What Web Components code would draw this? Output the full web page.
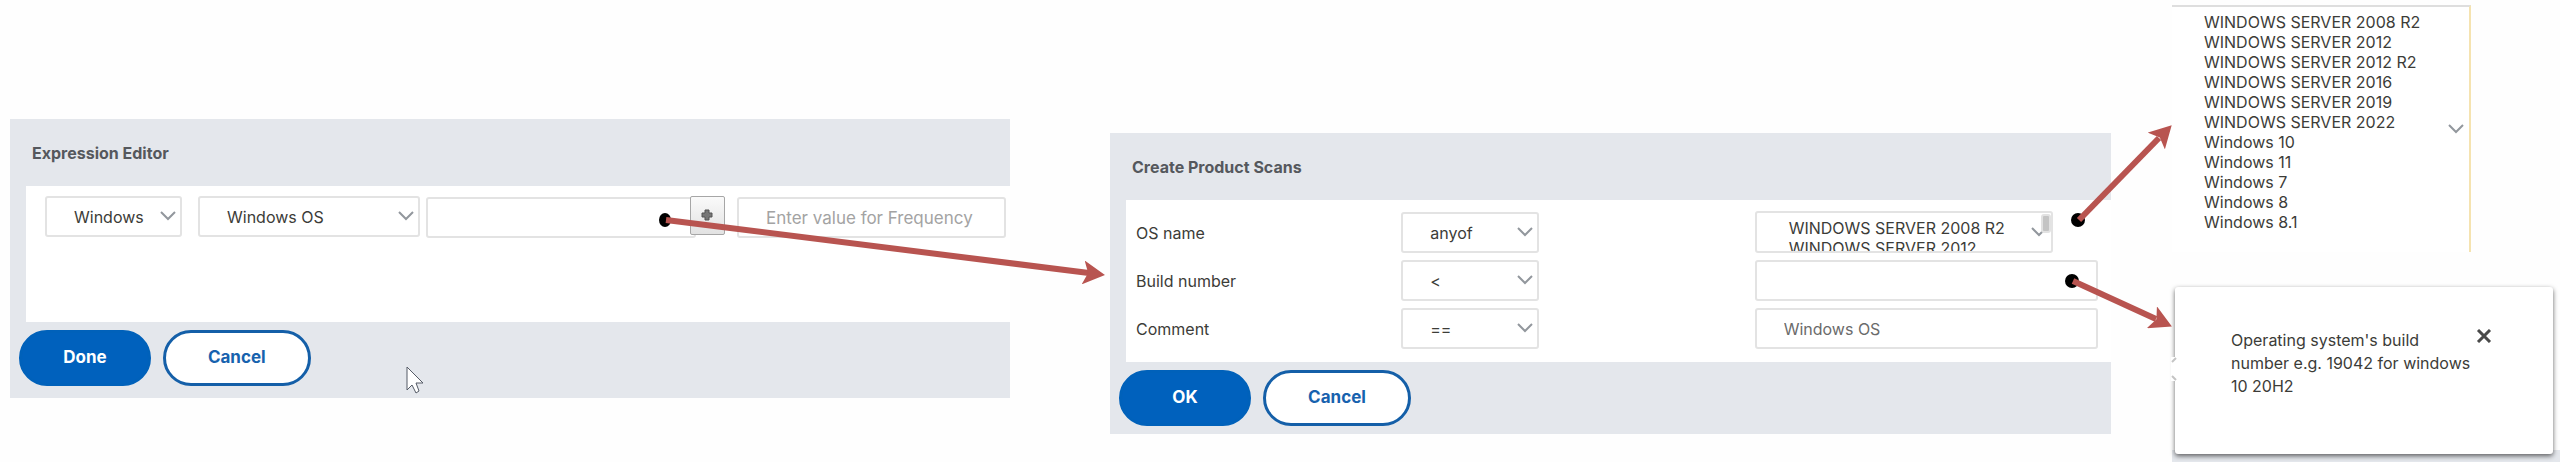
<!DOCTYPE html>
<html lang="en">
<head>
<meta charset="utf-8">
<title>Expression Editor</title>
<style>
body { margin: 0; background: #fefefe; color: #3c3c38; font: 16px/20px Inter, "Liberation Sans", sans-serif; }
</style>
</head>
<body>
<scan-page></scan-page>
<script>
const define = (name, html, setup) => {
  const template = document.createElement('template');
  template.innerHTML = html;
  customElements.define(name, class extends HTMLElement {
    constructor() {
      super();
      this.attachShadow({ mode: 'open' }).append(template.content.cloneNode(true));
    }
    connectedCallback() {
      if (setup && !this.ready) { this.ready = true; setup(this, this.shadowRoot); }
    }
  });
};

const controlCss = `
  *, *::before { box-sizing: border-box; }
  select, input {
    display: block; width: 100%; height: 41px; margin: 0; padding: 0 27px;
    border: 2px solid #e3e3e3; border-radius: 3px; background: #fff; color: #3c3c38;
    font: inherit; appearance: none; outline: none;
  }
  .pick { position: relative; }
  .pick svg { position: absolute; right: 6px; top: 14px; width: 16px; height: 12px; pointer-events: none; }
  input { font-size: var(--entry-size, 16px); color: #6b6b6b; }
  input::placeholder { color: #a3a3a3; opacity: 1; }
`;
const chevron = `<svg viewBox="0 0 16 12" aria-hidden="true"><path d="M1 2l7 7 7-7" fill="none" stroke="#92979d" stroke-width="2"/></svg>`;

define('pill-button', `
  <style>
    :host { display: block; }
    button { width: 100%; height: 56px; border: 3px solid #0061ba; border-radius: 28px; background: #0061bd;
      color: #fff; font: inherit; font-size: 17px; font-weight: 700; padding: 0 0 2px; }
    :host([kind="outline"]) button { background: #fff; color: #1762ae; border-color: #145fa8; }
  </style>
  <button type="button"><slot></slot></button>`);

define('select-field', `
  <style>:host { display: block; } ${controlCss}</style>
  <div class="pick"><select><option></option></select>${chevron}</div>`,
  (el, root) => {
    root.querySelector('option').textContent = el.getAttribute('value');
    root.querySelector('select').setAttribute('aria-label', el.getAttribute('label'));
  });

define('text-field', `
  <style>:host { display: block; } ${controlCss}</style>
  <input type="text">`,
  (el, root) => {
    const input = root.querySelector('input');
    input.setAttribute('aria-label', el.getAttribute('label'));
    input.placeholder = el.getAttribute('placeholder') || '';
  });

define('add-button', `
  <style>
    :host { display: block; position: relative; z-index: 1; }
    button { display: grid; place-items: center; box-sizing: border-box; width: 100%; height: 39px; padding: 0 2px 2px 0;
      border: 1px solid #a6a6a6; border-radius: 2px; background: linear-gradient(#fafafa, #e2e2e2); }
    svg { width: 12px; height: 12px; }
  </style>
  <button type="button" aria-label="Add expression">
    <svg viewBox="0 0 12 12"><path d="M4 1h4v3h3v4H8v3H4V8H1V4h3z" fill="#777" stroke="#555"/></svg>
  </button>`);

define('option-list', `
  <style>
    :host { display: block; }
    .frame { position: relative; box-sizing: border-box; overflow: hidden; }
    select { display: block; width: 100%; margin: 0; border: 0; padding: 0; background: transparent; appearance: none;
      color: inherit; font: inherit; overflow: hidden; outline: none; border-radius: 0; scrollbar-width: none; }
    option { min-height: 0; height: 20px; padding: 0; font: inherit; line-height: 20px; }
    svg { position: absolute; width: 16px; height: 12px; }
    :host([mode="compact"]) .frame { height: 42px; border: 2px solid #e3e3e3; border-radius: 3px; background: #fff; }
    :host([mode="compact"]) select { height: 38px; padding: 5px 0 0 32px; }
    :host([mode="compact"]) svg { right: 4px; top: 13px; }
    :host([mode="compact"]) .frame::after { content: ""; position: absolute; right: 0; top: 1px; width: 10px; height: 19px;
      border-radius: 3px; background: #c4c4c4; border: 2px solid #e2e2e2; box-sizing: border-box; }
    :host([mode="full"]) .frame { border-top: 2px solid #dedede; border-right: 2px solid #f5e3b0; padding: 5px 0 20px 32px; background: #fff; }
    :host([mode="full"]) select { height: 220px; }
    :host([mode="full"]) svg { right: 5px; top: 116px; }
  </style>
  <div class="frame"><select multiple></select>${chevron}</div>`,
  (el, root) => {
    const select = root.querySelector('select');
    select.setAttribute('aria-label', 'OS name values');
    const names = ['WINDOWS SERVER 2008 R2', 'WINDOWS SERVER 2012', 'WINDOWS SERVER 2012 R2', 'WINDOWS SERVER 2016',
      'WINDOWS SERVER 2019', 'WINDOWS SERVER 2022', 'Windows 10', 'Windows 11', 'Windows 7', 'Windows 8', 'Windows 8.1'];
    names.slice(0, el.getAttribute('mode') === 'compact' ? 2 : 11).forEach(n => select.add(new Option(n)));
  });

define('criteria-row', `
  <style>
    :host { display: grid; grid-template-columns: 265fr 138fr 215fr 343fr; align-items: center; }
    ${controlCss}
    .value { grid-column: 4; }
  </style>
  <label for="op"></label>
  <div class="pick"><select id="op"><option></option></select>${chevron}</div>
  <div class="value"><slot><input type="text"></slot></div>`,
  (el, root) => {
    root.querySelector('label').textContent = el.getAttribute('label');
    root.querySelector('option').textContent = el.getAttribute('operator');
    const input = root.querySelector('input');
    input.value = el.getAttribute('value') || '';
    input.setAttribute('aria-label', el.getAttribute('label') + ' value');
  });

define('dialog-panel', `
  <style>
    :host { display: block; background: #e4e7ec; }
    h2 { margin: 0; padding: 24px 0 23px 22px; font-size: 16px; line-height: 20px; font-weight: 700; color: #55585d; }
    .body { margin-left: 16px; background: #fff; }
    .actions { display: grid; grid-template-columns: 132fr 12fr 148fr 700fr; padding: 8px 0 0 9px; height: var(--foot, 67px); box-sizing: border-box; }
    ::slotted(pill-button:nth-of-type(2)) { grid-column: 3; }
  </style>
  <section>
    <h2><slot name="title"></slot></h2>
    <div class="body"><slot></slot></div>
    <div class="actions"><slot name="action"></slot></div>
  </section>`);

define('help-card', `
  <style>
    :host { display: block; padding: 0 7px 8px 3px; background: linear-gradient(to top, #e4e7ec 12px, transparent 12px); }
    .card { position: relative; box-sizing: border-box; display: flex; padding: 42px 32px 56px 56px; background: #fff; border-radius: 3px;
      box-shadow: 0 2px 5px rgba(0,0,0,.6); }
    .notch { position: absolute; left: -4px; top: 70px; width: 8px; height: 24px; }
    p { margin: 0; line-height: 23px; white-space: nowrap; width: 245px; }
    button { border: 0; padding: 0; background: none; width: 16px; height: 14px; }
    svg { display: block; }
  </style>
  <div class="card" role="tooltip">
    <svg class="notch" viewBox="0 0 8 24" aria-hidden="true"><path d="M0 0h8v24H0z" fill="#fff"/><path d="M1 5l4-4M1 19l4 4" stroke="#c4c4c4" stroke-width="2"/></svg>
    <p>Operating system's build<br>number e.g. 19042 for windows<br>10 20H2</p>
    <button type="button" aria-label="Close"><svg width="16" height="14" viewBox="0 0 16 14"><path d="M2 1l12 12M14 1L2 13" stroke="#4a4a4a" stroke-width="3"/></svg></button>
  </div>`);

define('callout-arrows', `
  <style>
    :host { position: absolute; inset: 0; z-index: 2; pointer-events: none; }
    svg { display: block; width: 100%; height: 462px; }
  </style>
  <svg viewBox="0 0 2560 462" preserveAspectRatio="none" aria-hidden="true">
    <defs><marker id="head" viewBox="0 0 22 24" refX="21" refY="12" markerWidth="22" markerHeight="24" markerUnits="userSpaceOnUse" orient="auto">
      <path d="M22 12L0 0l5 12-5 12z" fill="#b85450"/></marker></defs>
    <g>
      <ellipse cx="665" cy="220" rx="6" ry="7"/><circle cx="2078" cy="220" r="7"/><circle cx="2072" cy="281" r="7"/>
    </g>
    <g stroke="#b85450" fill="none">
      <path d="M666 220L1089 273" stroke-width="6"/><path d="M666 220L1104 275" stroke="none" marker-end="url(#head)"/>
      <path d="M2079 220L2159 138" stroke-width="6"/><path d="M2079 220L2171 126" stroke="none" marker-end="url(#head)"/>
      <path d="M2073 281L2156 319" stroke-width="6"/><path d="M2073 281L2171 326" stroke="none" marker-end="url(#head)"/>
    </g>
    <path d="M407 367v23l5-5 4 8 3-2-3-8h7z" fill="#fff" stroke="#555b66"/>
  </svg>`);

define('scan-page', `
  <style>
    :host { display: grid; position: relative; grid-template-columns: 1000fr 100fr 1001fr 61fr 388fr; align-items: start; padding-left: 10px; }
    .editor { margin-top: 119px; --foot: 76px; }
    .scans { grid-column: 3; margin-top: 133px; --foot: 72px; }
    aside { grid-column: 5; padding-top: 5px; }
    aside option-list { width: 77%; }
    help-card { margin-top: 35px; }
    .expression { display: grid; grid-template-columns: 137fr 16fr 222fr 6fr 264fr 35fr 12fr 269fr; padding: 10px 4px 84px 19px; }
    .second { grid-column: 3; }
    .third { grid-column: 5; margin: 1px -6px 0 0; }
    .last { grid-column: 8; margin-top: 1px; --entry-size: 17px; }
    .criteria { display: grid; gap: 7px; padding: 12px 13px 13px 10px; }
    .criteria option-list { width: 87%; margin: -1px 0 0; }
  </style>
  <dialog-panel class="editor">
    <span slot="title">Expression Editor</span>
    <div class="expression">
      <select-field label="Platform" value="Windows"></select-field>
      <select-field class="second" label="Product" value="Windows OS"></select-field>
      <text-field class="third" label="Expression"></text-field>
      <add-button></add-button>
      <text-field class="last" label="Frequency" placeholder="Enter value for Frequency"></text-field>
    </div>
    <pill-button slot="action">Done</pill-button>
    <pill-button slot="action" kind="outline">Cancel</pill-button>
  </dialog-panel>
  <dialog-panel class="scans">
    <span slot="title">Create Product Scans</span>
    <div class="criteria">
      <criteria-row label="OS name" operator="anyof"><option-list mode="compact"></option-list></criteria-row>
      <criteria-row label="Build number" operator="&lt;"></criteria-row>
      <criteria-row label="Comment" operator="==" value="Windows OS"></criteria-row>
    </div>
    <pill-button slot="action">OK</pill-button>
    <pill-button slot="action" kind="outline">Cancel</pill-button>
  </dialog-panel>
  <aside>
    <option-list mode="full"></option-list>
    <help-card></help-card>
  </aside>
  <callout-arrows></callout-arrows>`);
</script>
</body>
</html>
